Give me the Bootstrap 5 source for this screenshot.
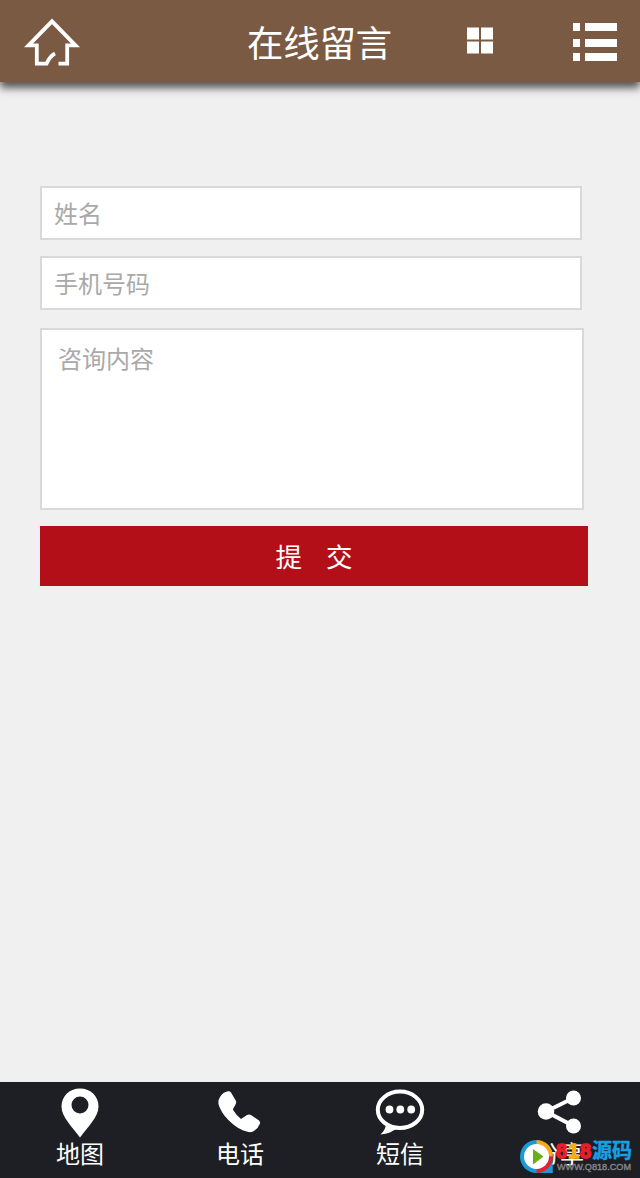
<!DOCTYPE html>
<html lang="zh-CN">
<head>
<meta charset="utf-8">
<meta name="viewport" content="width=device-width, initial-scale=1">
<title>在线留言</title>
<link href="https://cdn.jsdelivr.net/npm/bootstrap@5.3.0/dist/css/bootstrap.min.css" rel="stylesheet">
<style>
body{background:#f0f0f0;font-family:"Liberation Sans","Noto Sans CJK SC",sans-serif;height:1178px;overflow:hidden}
svg{display:block}
.topbar{height:82px;background:#7a5a43;box-shadow:0 6px 8px #555;padding:0 23px 0 24px;display:grid;grid-template-columns:223px 218px 1fr auto}
.topbar h1{font-size:36.5px;line-height:40px;letter-spacing:-.3px;padding-top:7px}
.msg-form{padding:104px 52px 0 40px}
.msg-form .form-control{border:2px solid #d9d9d9;border-radius:0;font-size:24px;line-height:36px;color:#333;background:#fff;resize:none}
.msg-form .form-control::placeholder{color:#a9a9a9;opacity:1}
.msg-form input.form-control{width:542px;height:54px;padding:9px 12px 5px}
.msg-form textarea.form-control{width:544px;height:182px;margin-top:18px;padding:12px 16px}
.btn-send{background:#b20f19;color:#fff;width:548px;height:60px;border:0;border-radius:0;font-size:26.5px;padding:5px 0 0}
.btn-send:hover{background:#9c0d16;color:#fff}
.gap-field{margin-bottom:16px}
.dock{height:96px;background:#1e1f24}
.dock a{font-size:24px;line-height:34px;padding-top:5px}
.dock a svg{height:51px;width:60px}
.stamp{right:7px;bottom:2px;width:114px;height:38px}
</style>
</head>
<body class="d-flex flex-column m-0">
<header class="topbar align-items-center text-white position-relative">
  <a href="#" aria-label="首页"><svg width="56" height="50" viewBox="24 16 56 50" fill="none" stroke="#fff" stroke-width="3.8"><path d="M55 53.5Q50 56 46.5 63.7H36.8V45.3H28.5L52 21.3 75.500 45.300H67.200V63.700H58.500"/></svg></a>
  <h1 class="m-0 fw-normal text-nowrap">在线留言</h1>
  <a href="#" aria-label="分类"><svg width="30" height="30" viewBox="465 26 30 30" fill="#fff"><path d="M467 27.500h12v12h-12zM481 27.500h12v12h-12zM467 41.500h12v12h-12zM481 41.500h12v12h-12z"/></svg></a>
  <a href="#" aria-label="菜单"><svg width="44" height="40" viewBox="573 21 44 40" fill="#fff"><path d="M573 23h7v8h-7zM585 23h32v8h-32zM573 39h7v8h-7zM585 39h32v8h-32zM573 53h7v8h-7zM585 53h32v8h-32z"/></svg></a>
</header>
<main class="flex-grow-1">
  <form class="msg-form">
    <input class="form-control gap-field" type="text" placeholder="姓名">
    <input class="form-control" type="tel" placeholder="手机号码">
    <textarea class="form-control gap-field" placeholder="咨询内容"></textarea>
    <button class="btn btn-send d-flex justify-content-center align-items-center gap-4" type="button"><span>提</span><span>交</span></button>
  </form>
</main>
<footer class="dock position-relative">
  <nav class="row g-0 text-center">
    <a href="#" class="col d-flex flex-column align-items-center text-white text-decoration-none">
      <svg viewBox="50 1087 60 51"><path fill="#fff" fill-rule="evenodd" d="M80 1088.500C69 1088.500 61.500 1096.500 61.500 1106.500C61.500 1117 72 1126.500 80 1137.500C88 1126.500 98.500 1117 98.500 1106.500C98.500 1096.500 91 1088.500 80 1088.500ZM80 1096.500A8.500 8.500 0 1 1 80 1113.500A8.500 8.500 0 1 1 80 1096.500Z"/></svg>
      <span>地图</span></a>
    <a href="#" class="col d-flex flex-column align-items-center text-white text-decoration-none">
      <svg viewBox="210 1087 60 51"><path fill="#fff" d="M220 1097Q223 1092 228 1091.200Q230 1091 231 1092.500L236 1101Q236.500 1103 235.500 1104.500L232.800 1109.500Q236 1115 241 1119L247 1115Q249 1114 251 1115L259 1120.500Q260.500 1122 260 1123.500Q258 1129 253 1131.500Q250 1133 245 1131C233 1127 221 1114 218.500 1104Q218 1100 220 1097Z"/></svg>
      <span>电话</span></a>
    <a href="#" class="col d-flex flex-column align-items-center text-white text-decoration-none">
      <svg viewBox="370 1087 60 51"><path fill="#fff" d="M386 1124Q385.500 1130 380.500 1134.500Q391 1133.500 397 1128Z"/><ellipse cx="400" cy="1109.800" rx="22.200" ry="18.200" fill="#1e1f24" stroke="#fff" stroke-width="4"/><g fill="#fff"><circle cx="389.500" cy="1109.500" r="3.900"/><circle cx="400.300" cy="1109.500" r="3.900"/><circle cx="411.200" cy="1109.500" r="3.900"/></g></svg>
      <span>短信</span></a>
    <a href="#" class="col d-flex flex-column align-items-center text-white text-decoration-none">
      <svg viewBox="530 1087 60 51"><path d="M573.500 1098 546 1111.500 573.500 1126" fill="none" stroke="#fff" stroke-width="4"/><g fill="#fff"><circle cx="573.500" cy="1098" r="7.500"/><circle cx="546" cy="1111.500" r="8.300"/><circle cx="573.500" cy="1126" r="7.500"/></g></svg>
      <span>分享</span></a>
  </nav>
  <svg class="stamp position-absolute" viewBox="519 1138 114 38" font-family="'Liberation Sans','Noto Sans CJK SC',sans-serif">
    <path fill="#1a9ad9" d="M536.500 1140A16.500 16.500 0 0 0 536.500 1173H552.500V1156.500Z"/>
    <path fill="#f7a81b" d="M536.500 1140A16.500 16.500 0 0 1 553 1156.500H536.500Z"/>
    <path fill="#e2222e" d="M536.500 1156.500H553A16.500 16.500 0 0 1 536.500 1173Z"/>
    <path fill="#1a9ad9" d="M543 1173 552.500 1164V1173Z"/>
    <circle cx="536.500" cy="1156.500" r="12.500" fill="#fff"/>
    <path fill="#6cae16" d="M533 1149 543.500 1156.500 533 1164.500Z"/>
    <g font-weight="700" font-size="20"><text y="1158" stroke-width="1.400"><tspan x="556" fill="#ed1c2b" stroke="#ed1c2b">8</tspan><tspan x="568" fill="#f8ad12" stroke="#f8ad12">1</tspan><tspan x="580" fill="#ed1c2b" stroke="#ed1c2b">8</tspan></text>
    <text x="592" y="1158" font-size="20" fill="#18a0e5" stroke="#18a0e5" stroke-width=".4">源码</text></g>
    <text x="557" y="1170" font-size="9.300" textLength="74" lengthAdjust="spacingAndGlyphs" fill="#85858a" stroke="#85858a" stroke-width=".4">WWW.Q818.COM</text>
  </svg>
</footer>
<script src="https://cdn.jsdelivr.net/npm/bootstrap@5.3.0/dist/js/bootstrap.bundle.min.js"></script>
</body>
</html>
